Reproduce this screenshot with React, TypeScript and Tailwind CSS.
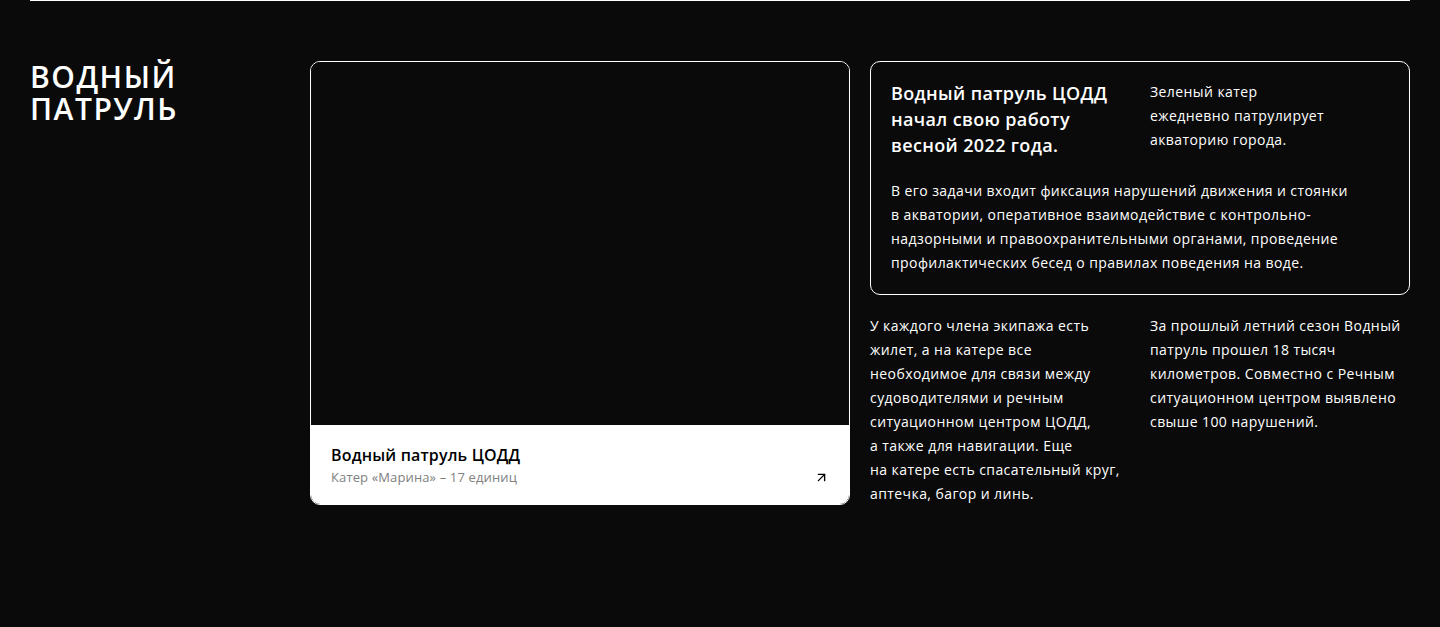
import { ArrowUpRight } from "lucide-react";

export default function App() {
  return (
    <div className="min-h-[627px] w-full bg-[#0a0a0a] font-['Open_Sans',sans-serif] text-white">
      <div className="mx-[30px] border-t border-white pt-[60px]">
        <div className="grid grid-cols-[260px_540px_540px] gap-x-5">
          {/* заголовок */}
          <h2 className="text-[30px] font-semibold uppercase leading-[32px] tracking-[0.05em]">
            Водный
            <br />
            патруль
          </h2>

          {/* карточка с фото */}
          <div className="flex h-[444px] flex-col overflow-hidden rounded-[10px] border border-white">
            <div className="flex-1 bg-[#0a0a0a]" />
            <div className="flex h-[79px] items-end justify-between bg-white px-5 pb-[17px]">
              <div>
                <div className="text-[16px] font-semibold leading-6 tracking-[0.01em] text-black">
                  Водный патруль ЦОДД
                </div>
                <div className="text-[13px] leading-5 tracking-[0.01em] text-[#808080]">
                  Катер «Марина» – 17 единиц
                </div>
              </div>
              <ArrowUpRight className="mb-[2px] h-[15px] w-[15px] text-black" strokeWidth={2.2} />
            </div>
          </div>

          {/* правая колонка */}
          <div className="flex flex-col text-[14px] leading-6 tracking-[0.03em]">
            <div className="rounded-[10px] border border-white px-5 pb-[19px] pt-[18px]">
              <div className="grid grid-cols-2 gap-x-5">
                <p className="text-[18px] font-semibold leading-[26px] tracking-[0.02em]">
                  Водный патруль ЦОДД начал свою работу весной 2022 года.
                </p>
                <p>
                  Зеленый катер
                  <br />
                  ежедневно патрулирует
                  <br />
                  акваторию города.
                </p>
              </div>
              <p className="mt-[21px]">
                В его задачи входит фиксация нарушений движения и стоянки
                <br />
                в акватории, оперативное взаимодействие с контрольно-
                <br />
                надзорными и правоохранительными органами, проведение
                <br />
                профилактических бесед о правилах поведения на воде.
              </p>
            </div>
            <div className="mt-[19px] grid grid-cols-2 gap-x-5">
              <p>
                У каждого члена экипажа есть
                <br />
                жилет, а на катере все
                <br />
                необходимое для связи между
                <br />
                судоводителями и речным
                <br />
                ситуационном центром ЦОДД,
                <br />
                а также для навигации. Еще
                <br />
                на катере есть спасательный круг,
                <br />
                аптечка, багор и линь.
              </p>
              <p>
                За прошлый летний сезон Водный
                <br />
                патруль прошел 18 тысяч
                <br />
                километров. Совместно с Речным
                <br />
                ситуационном центром выявлено
                <br />
                свыше 100 нарушений.
              </p>
            </div>
          </div>
        </div>
      </div>
    </div>
  );
}
